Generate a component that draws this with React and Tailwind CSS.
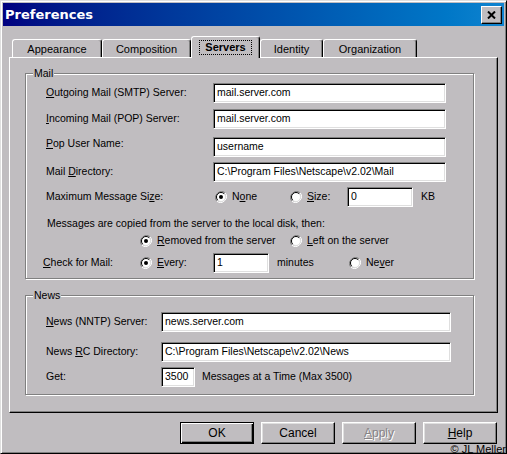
import React from "react";

const face = "font-['Liberation_Sans',Arial,sans-serif]";

// sunken white edit box, win9x style
function Field({ value, className }) {
  return (
    <div
      className={
        "h-5 bg-white border border-t-[#808080] border-l-[#808080] border-r-white border-b-white shadow-[inset_1px_1px_0_#000,inset_-1px_-1px_0_#dfdfdf] flex items-center pl-[3px] overflow-hidden whitespace-nowrap " +
        className
      }
    >
      {value}
    </div>
  );
}

function Radio({ checked }) {
  return (
    <svg width="12" height="12" viewBox="0 0 12 12" className="shrink-0">
      <path d="M10.2 1.8A6 6 0 0 0 1.8 10.2" stroke="#808080" strokeWidth="1" fill="none" />
      <path d="M1.8 10.2A6 6 0 0 0 10.2 1.8" stroke="#ffffff" strokeWidth="1" fill="none" />
      <circle cx="6" cy="6" r="4.5" fill="#fff" />
      <path d="M9.2 2.8A4.5 4.5 0 0 0 2.8 9.2" stroke="#000" strokeWidth="1" fill="none" />
      <path d="M2.8 9.2A4.5 4.5 0 0 0 9.2 2.8" stroke="#dfdfdf" strokeWidth="1" fill="none" />
      {checked && <circle cx="6" cy="6" r="2" fill="#000" />}
    </svg>
  );
}

function Option({ checked, children, className }) {
  return (
    <div className={"flex items-center " + (className || "")}>
      <Radio checked={checked} />
      <span className="ml-[5px]">{children}</span>
    </div>
  );
}

function Tab({ label, width, selected }) {
  if (selected) {
    return (
      <div
        className={
          "relative z-10 -mb-px h-[22px] bg-[#c0bdc0] border-t border-l border-white border-r border-r-black rounded-t-[3px] shadow-[inset_-1px_0_0_#808080] flex items-center justify-center " +
          width
        }
      >
        <span className="font-bold text-[11px] px-[5px] leading-[13px] outline outline-1 outline-dotted outline-black">
          Servers
        </span>
      </div>
    );
  }
  return (
    <div
      className={
        "h-[18px] bg-[#c0bdc0] border-t border-l border-white border-r border-r-black rounded-t-[3px] shadow-[inset_-1px_0_0_#808080] flex items-center justify-center pt-[1px] " +
        width
      }
    >
      {label}
    </div>
  );
}

function Group({ title, className, children }) {
  return (
    <div
      className={
        "relative border border-[#808080] shadow-[inset_1px_1px_0_#fff,1px_1px_0_#fff] " +
        className
      }
    >
      <span className="absolute -top-[8px] left-[7px] bg-[#c0bdc0] px-[1px] leading-[14px]">
        {title}
      </span>
      {children}
    </div>
  );
}

function Button({ children, isDefault, disabled }) {
  const edge = isDefault
    ? "border border-black shadow-[inset_1px_1px_0_#fff,inset_-1px_-1px_0_#000,inset_-2px_-2px_0_#808080]"
    : "border border-t-white border-l-white border-r-black border-b-black shadow-[inset_-1px_-1px_0_#808080,inset_1px_1px_0_#dfdfdf]";
  return (
    <div
      className={
        "w-[74px] h-[22px] flex items-center justify-center text-[12px] " +
        edge +
        (disabled ? " text-[#868386] [text-shadow:1px_1px_0_#fff]" : "")
      }
    >
      {children}
    </div>
  );
}

export default function App() {
  return (
    <div
      className={
        "relative w-[507px] h-[454px] overflow-hidden bg-[#c0bdc0] text-black text-[10.5px] border border-t-[#dfdfdf] border-l-[#dfdfdf] border-r-black border-b-black shadow-[inset_1px_1px_0_#fff,inset_-1px_-1px_0_#808080] p-[2px] " +
        face
      }
    >
      {/* title bar */}
      <div className="h-[23px] flex items-center justify-between bg-gradient-to-r from-[#000080] to-[#1084d0] pl-[2px] pr-[2px]">
        <span className="text-white font-bold text-[13px] font-['DejaVu_Sans',Verdana,sans-serif]">
          Preferences
        </span>
        <div className="w-[21px] h-[18px] bg-[#c0bdc0] border border-t-white border-l-white border-r-black border-b-black shadow-[inset_-1px_-1px_0_#808080] flex items-center justify-center">
          <svg width="9" height="8" viewBox="0 0 9 8">
            <path d="M1 0.5L8 7.5M8 0.5L1 7.5" stroke="#000" strokeWidth="2" />
          </svg>
        </div>
      </div>

      {/* tabs */}
      <div className="mt-[10px] ml-[9px] h-[21px] flex items-end text-[11px]">
        <Tab label="Appearance" width="w-[90px]" />
        <Tab label="Composition" width="w-[89px]" />
        <Tab label="Servers" width="w-[69px]" selected />
        <Tab label="Identity" width="w-[63px]" />
        <Tab label="Organization" width="w-[94px]" />
      </div>

      {/* tab page */}
      <div className="ml-[6px] w-[489px] h-[356px] border border-t-white border-l-white border-r-black border-b-black shadow-[inset_-1px_-1px_0_#808080] pt-[15px] pl-[15px]">
        <Group title="Mail" className="w-[449px]">
          <div className="pl-[20px] pt-[9px] pb-[5px]">
            <div className="flex items-center h-5">
              <span className="w-[167px]"><u>O</u>utgoing Mail (SMTP) Server:</span>
              <Field value="mail.server.com" className="w-[233px]" />
            </div>
            <div className="flex items-center h-5 mt-[6px]">
              <span className="w-[167px]"><u>I</u>ncoming Mail (POP) Server:</span>
              <Field value="mail.server.com" className="w-[233px]" />
            </div>
            <div className="flex items-start h-5 mt-[8px]">
              <span className="w-[167px] leading-[13px]"><u>P</u>op User Name:</span>
              <Field value="username" className="w-[233px]" />
            </div>
            <div className="flex items-center h-5 mt-[5px]">
              <span className="w-[167px]">Mail <u>D</u>irectory:</span>
              <Field value="C:\Program Files\Netscape\v2.02\Mail" className="w-[233px]" />
            </div>
            <div className="flex items-center h-5 mt-[5px]">
              <span className="w-[169px]">Maximum Message Si<u>z</u>e:</span>
              <Option checked className="w-[75px]">N<u>o</u>ne</Option>
              <Option className="w-[57px]"><u>S</u>ize:</Option>
              <Field value="0" className="w-[66px]" />
              <span className="ml-[8px]">KB</span>
            </div>
            <div className="h-[17px] mt-[8px] flex items-center ml-px">
              Messages are copied from the server to the local disk, then:
            </div>
            <div className="h-[17px] flex items-center pl-[94px]">
              <Option checked className="w-[150px]"><u>R</u>emoved from the server</Option>
              <Option><u>L</u>eft on the server</Option>
            </div>
            <div className="flex items-center h-5 mt-[4px]">
              <span className="w-[97px] -ml-[3px]"><u>C</u>heck for Mail:</span>
              <Option checked className="w-[73px]"><u>E</u>very:</Option>
              <Field value="1" className="w-[56px]" />
              <span className="ml-[8px] w-[72px]">minutes</span>
              <Option>Ne<u>v</u>er</Option>
            </div>
          </div>
        </Group>

        <Group title="News" className="w-[449px] mt-[16px]">
          <div className="pl-[20px] pt-[16px] pb-[7px]">
            <div className="flex items-center h-5">
              <span className="w-[115px]"><u>N</u>ews (NNTP) Server:</span>
              <Field value="news.server.com" className="w-[290px]" />
            </div>
            <div className="flex items-center h-5 mt-[10px]">
              <span className="w-[115px]">News <u>R</u>C Directory:</span>
              <Field value="C:\Program Files\Netscape\v2.02\News" className="w-[290px]" />
            </div>
            <div className="flex items-center h-5 mt-[5px]">
              <span className="w-[115px]">Get:</span>
              <Field value="3500" className="w-[34px]" />
              <span className="ml-[7px]">Messages at a Time (Max 3500)</span>
            </div>
          </div>
        </Group>
      </div>

      {/* dialog buttons */}
      <div className="mt-[9px] ml-[177px] flex gap-[7px]">
        <Button isDefault>OK</Button>
        <Button>Cancel</Button>
        <Button disabled><u>A</u>pply</Button>
        <Button><u>H</u>elp</Button>
      </div>

      <span className="absolute right-0 bottom-[-2px] text-[11px] leading-[12px]">
        © JL Meller
      </span>
    </div>
  );
}
